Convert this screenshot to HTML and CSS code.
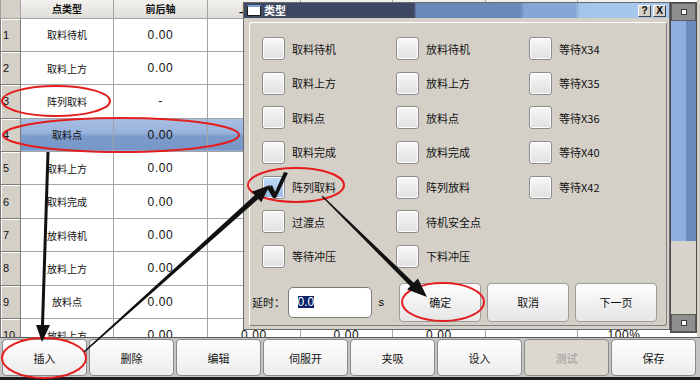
FILE: index.html
```html
<!DOCTYPE html>
<html lang="zh-CN">
<head>
  <meta charset="UTF-8" />
  <title>点类型</title>
  <link rel="stylesheet" href="styles.css">
</head>
<body>
  <div class="screen">
    <div class="main">
      <div class="grid">
        <table class="points">
          <colgroup>
            <col style="width:20px"><col style="width:93px"><col style="width:94px"><col style="width:93px">
            <col style="width:92px"><col style="width:93px"><col style="width:92px"><col style="width:93px">
          </colgroup>
          <thead>
            <tr><th class="corner"></th><th>点类型</th><th>前后轴</th><th>上下轴</th><th>旋转轴</th><th>速度</th><th>延时</th><th>百分比</th></tr>
          </thead>
          <tbody>
            <tr><td class="num">1</td><td class="type">取料待机</td><td class="val">0.00</td><td></td><td></td><td></td><td></td><td></td></tr>
            <tr><td class="num">2</td><td class="type">取料上方</td><td class="val">0.00</td><td></td><td></td><td></td><td></td><td></td></tr>
            <tr><td class="num">3</td><td class="type">阵列取料</td><td class="val">-</td><td></td><td></td><td></td><td></td><td></td></tr>
            <tr class="sel"><td class="num">4</td><td class="type">取料点</td><td class="val">0.00</td><td></td><td></td><td></td><td></td><td></td></tr>
            <tr><td class="num">5</td><td class="type">取料上方</td><td class="val">0.00</td><td></td><td></td><td></td><td></td><td></td></tr>
            <tr><td class="num">6</td><td class="type">取料完成</td><td class="val">0.00</td><td></td><td></td><td></td><td></td><td></td></tr>
            <tr><td class="num">7</td><td class="type">放料待机</td><td class="val">0.00</td><td></td><td></td><td></td><td></td><td></td></tr>
            <tr><td class="num">8</td><td class="type">放料上方</td><td class="val">0.00</td><td></td><td></td><td></td><td></td><td></td></tr>
            <tr><td class="num">9</td><td class="type">放料点</td><td class="val">0.00</td><td></td><td></td><td></td><td></td><td></td></tr>
            <tr><td class="num">10</td><td class="type">放料上方</td><td class="val">0.00</td><td class="val">0.00</td><td class="val">0.00</td><td class="val">0.00</td><td></td><td class="val">100%</td></tr>
          </tbody>
        </table>
      </div>
      <div class="scrollbar">
        <div class="sb-btn"><span></span></div>
        <div class="sb-thumb"></div>
        <div class="sb-track"></div>
        <div class="sb-btn"><span></span></div>
      </div>
      <div class="edge"></div>
    </div>

    <div class="toolbar">
      <button class="tool">插入</button>
      <button class="tool">删除</button>
      <button class="tool">编辑</button>
      <button class="tool">伺服开</button>
      <button class="tool">夹吸</button>
      <button class="tool">设入</button>
      <button class="tool" disabled>测试</button>
      <button class="tool">保存</button>
    </div>

    <div class="dialog">
      <div class="titlebar">
        <span class="t-icon"></span>
        <span class="t-text">类型</span>
        <span class="t-btn">?</span>
        <span class="t-btn">X</span>
      </div>
      <div class="panel">
        <div class="options">
          <div class="opt"><span class="box"></span>取料待机</div>
          <div class="opt"><span class="box"></span>取料上方</div>
          <div class="opt"><span class="box"></span>取料点</div>
          <div class="opt"><span class="box"></span>取料完成</div>
          <div class="opt on"><span class="box">
            <svg class="check" width="30" height="30" viewBox="0 0 30 30"><polygon points="4,15 9,12 12,19 21,-1 25,0 13,25 10,25" fill="#111"/></svg>
          </span>阵列取料</div>
          <div class="opt"><span class="box"></span>过渡点</div>
          <div class="opt"><span class="box"></span>等待冲压</div>
          <div class="opt"><span class="box"></span>放料待机</div>
          <div class="opt"><span class="box"></span>放料上方</div>
          <div class="opt"><span class="box"></span>放料点</div>
          <div class="opt"><span class="box"></span>放料完成</div>
          <div class="opt"><span class="box"></span>阵列放料</div>
          <div class="opt"><span class="box"></span>待机安全点</div>
          <div class="opt"><span class="box"></span>下料冲压</div>
          <div class="opt"><span class="box"></span>等待X34</div>
          <div class="opt"><span class="box"></span>等待X35</div>
          <div class="opt"><span class="box"></span>等待X36</div>
          <div class="opt"><span class="box"></span>等待X40</div>
          <div class="opt"><span class="box"></span>等待X42</div>
        </div>
        <div class="footer">
          <span class="delay-label">延时：</span>
          <span class="delay-input"><span class="sel-text">0.0</span></span>
          <span class="unit">s</span>
          <button class="dbtn">确定</button>
          <button class="dbtn">取消</button>
          <button class="dbtn">下一页</button>
        </div>
      </div>
    </div>

    <!-- annotations drawn over the screenshot -->
    <svg class="marks" width="700" height="380" viewBox="0 0 700 380">
      <g fill="none" stroke="#e41e1e" stroke-width="2">
        <ellipse cx="56" cy="101" rx="54" ry="15"/>
        <ellipse cx="121" cy="135" rx="118" ry="17"/>
        <ellipse cx="44" cy="358" rx="42" ry="20"/>
        <ellipse cx="296" cy="185" rx="48" ry="17"/>
        <ellipse cx="443" cy="302" rx="41" ry="19"/>
      </g>
      <g fill="#111">
        <polygon points="46.5,152 49.5,152 44,325 50,325 42,342 36,325 41,325"/>
        <polygon points="84.5,352.6 258.3,198.9 261.3,202.2 270,185 251.9,191.8 254.9,195.1 83.5,351.4"/>
        <polygon points="322.4,195.6 413.7,282.7 417.9,278.5 427,297 407.2,289.6 410.3,286.3 321.6,196.4"/>
      </g>
    </svg>
  </div>
</body>
</html>
```

FILE: styles.css
```css
* {
  box-sizing: border-box;
}

body {
  margin: 0;
  background: #d4d0c8;
  font-family: "Noto Sans CJK SC", "Liberation Sans", sans-serif;
}

.screen {
  position: relative;
  width: 700px;
  height: 380px;
  overflow: hidden;
  background: #d4d0c8;
}

/* table + scrollbar */

.main {
  display: flex;
  height: 337px;
  overflow: hidden;
  background: #fff;
}

.grid {
  width: 670px;
  overflow: hidden;
}

.points {
  width: 670px;
  table-layout: fixed;
  border-collapse: collapse;
}

.points th,
.points td {
  border: 1px solid #a4a4a4;
  padding: 0;
  text-align: center;
  white-space: nowrap;
  overflow: hidden;
  color: #111;
}

.points thead th {
  height: 18px;
  border-top: none;
  background: linear-gradient(#f2f1ee, #e0ded9);
  font-size: 10px;
  font-weight: bold;
}

.points th.corner {
  background: #d4d0c8;
}

.points tbody tr {
  height: 33.4px;
}

.points td.num {
  background: #d4d0c8;
  border-color: #7c7c7c;
  box-shadow: inset 1px 1px 0 #fff;
  text-align: left;
  padding-left: 2px;
  font: 11px "Liberation Sans", sans-serif;
}

.points td.type {
  font-size: 10px;
}

.points td.val {
  font: 12px "Liberation Sans", sans-serif;
  letter-spacing: 0.6px;
}

.points tr.sel td:not(.num) {
  background: linear-gradient(#a8c0e4, #98b2dc 45%, #7c9ccc 55%, #7696c8);
}

.scrollbar {
  width: 27px;
  height: 331px;
  margin-top: 2px;
  border: 1px solid #4c4c4c;
  display: flex;
  flex-direction: column;
  background: #d8d4cc;
}

.sb-btn {
  height: 18px;
  background: #8e8e8e;
  border: 1px solid #5a5a5a;
  display: flex;
  align-items: center;
  justify-content: center;
}

.sb-btn span {
  width: 6px;
  height: 6px;
  border: 1px solid #3a3a3a;
  background: #fff;
}

.sb-thumb {
  height: 220px;
  background: linear-gradient(90deg, #8eaee0 0, #8eaee0 58%, #6c8cc0 58%, #6c8cc0 100%);
}

.sb-track {
  flex: 1;
}

.edge {
  width: 3px;
  background: #d4d0c8;
}

/* bottom buttons */

.toolbar {
  display: flex;
  gap: 2px;
  height: 43px;
  padding: 1px 2px;
  background: #c4c4c4;
  border-top: 1px solid #5a5a5a;
  border-bottom: 3px solid #1c1c1c;
}

.tool {
  width: 85px;
  height: 37px;
  padding: 0;
  border: 1px solid #8a8a8a;
  border-radius: 4px;
  background: linear-gradient(#fefefe, #ececec);
  font: 11px "Noto Sans CJK SC", sans-serif;
  color: #111;
}

.tool:disabled {
  background: #dcd8d0;
  color: #9c9c9c;
}

/* type dialog */

.dialog {
  position: absolute;
  left: 243px;
  top: 2px;
  width: 427px;
  height: 328px;
  background: #d4d0c8;
  border: 1px solid #6a6a6a;
  display: flex;
  flex-direction: column;
}

.titlebar {
  height: 15px;
  display: flex;
  align-items: center;
  padding: 0 3px;
  color: #fff;
  background: linear-gradient(90deg, #3e4862 0, #3e4862 40%, #6888b8 40.5%, #6a8aba 65%, #86a6d6 66%, #86a6d6 78%, #a4c4ec 79%, #a8c8f0 100%);
}

.t-icon {
  width: 14px;
  height: 11px;
  margin-right: 3px;
  background: #fff;
  border: 1px solid #1a1a1a;
  border-top: 2px solid #7aa0d8;
}

.t-text {
  flex: 1;
  font-size: 11px;
  font-weight: bold;
  line-height: 15px;
}

.t-btn {
  width: 13px;
  height: 12px;
  margin-left: 2px;
  display: flex;
  align-items: center;
  justify-content: center;
  background: #d4d0c8;
  border: 1px solid;
  border-color: #fff #404040 #404040 #fff;
  color: #000;
  font: bold 10px "Liberation Sans", sans-serif;
}

.panel {
  flex: 1;
  margin: 4px 2px 3px 5px;
  padding: 14px 3px 0 2px;
  border: 1px solid;
  border-color: #fff #808080 #808080 #fff;
  border-radius: 3px;
}

.options {
  display: grid;
  grid-template-columns: 134px 133px 133px;
  grid-template-rows: repeat(7, 34.67px);
  grid-auto-flow: column;
  margin-left: 10px;
}

.opt {
  display: flex;
  align-items: center;
  gap: 7px;
  height: 23px;
  font-size: 11px;
  color: #111;
}

.box {
  position: relative;
  width: 23px;
  height: 23px;
  border: 1px solid #8c8c8c;
  border-radius: 3px;
  background: linear-gradient(#f8f8f8, #e0e0e0);
  box-shadow: inset 0 0 0 1px #fff;
}

.opt.on .box {
  background: linear-gradient(#c4dcf8, #96bae8);
}

.check {
  position: absolute;
  left: 0;
  top: -4px;
  overflow: visible;
}

.footer {
  display: flex;
  align-items: center;
  height: 39px;
  margin-top: 3px;
}

.delay-label {
  width: 36px;
  font-size: 11px;
  color: #111;
}

.delay-input {
  width: 85px;
  height: 31px;
  display: flex;
  align-items: center;
  padding-left: 9px;
  background: #fff;
  border: 1px solid #7a7a7a;
  border-radius: 5px;
}

.sel-text {
  background: #0a246a;
  color: #fff;
  font: 12px "Liberation Sans", sans-serif;
  line-height: 12px;
}

.unit {
  width: 28px;
  padding-left: 7px;
  font: 11px "Liberation Sans", sans-serif;
}

.dbtn {
  width: 83px;
  height: 39px;
  margin-right: 6px;
  padding: 0;
  border: 1px solid #9c9c9c;
  border-radius: 4px;
  background: linear-gradient(#fdfdfd, #e6e6e6);
  font: 11px "Noto Sans CJK SC", sans-serif;
  color: #111;
}

.marks {
  position: absolute;
  left: 0;
  top: 0;
  pointer-events: none;
}
```
